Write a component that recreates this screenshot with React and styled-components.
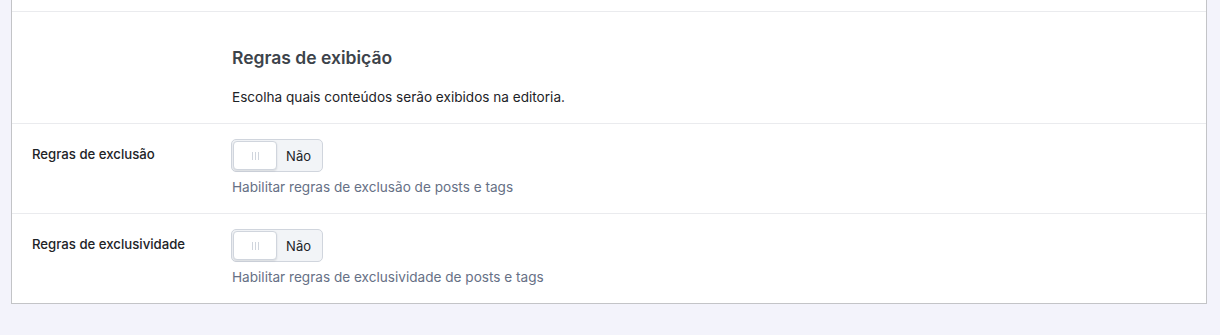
import React from "react";
import styled, { createGlobalStyle } from "styled-components";

const Global = createGlobalStyle`
  html, body { margin: 0; padding: 0; background: #f3f3fb; }
  body { font-family: Inter, "Noto Sans", "Liberation Sans", sans-serif; -webkit-font-smoothing: antialiased; }
`;

const Page = styled.div`
  height: 335px;
  overflow: hidden;
  padding: 0 13px 0 11px;
`;

const Card = styled.div`
  margin-top: -41px;
  background: #ffffff;
  border: 1px solid #c3c4c7;
`;

const Row = styled.div`
  display: grid;
  grid-template-columns: 220px 1fr;
  border-top: ${(p) => (p.$first ? "none" : "1px solid #eaebee")};
  min-height: ${(p) => p.$minH || 0}px;
  box-sizing: border-box;
`;

const LabelCell = styled.div`
  padding: ${(p) => p.$pad || "20px 0 0 20px"};
  font-size: 13.2px;
  font-weight: 500;
  line-height: 20px;
  color: #1d2327;
`;

const ContentCell = styled.div`
  padding: ${(p) => p.$pad || "15px 20px 16px 0"};
  display: flex;
  flex-direction: column;
  align-items: flex-start;
`;

const Heading = styled.h2`
  margin: 0;
  font-size: 17.5px;
  line-height: 24px;
  font-weight: 600;
  color: #3c434a;
`;

const Description = styled.p`
  margin: 17px 0 0;
  font-size: 13.6px;
  line-height: 20px;
  color: #1d2327;
`;

const Help = styled.p`
  margin: 5px 0 0;
  font-size: 13.6px;
  line-height: 20px;
  color: #667085;
`;

const Switch = styled.div`
  position: relative;
  box-sizing: border-box;
  width: 92px;
  height: 33px;
  margin-left: -1px;
  border: 1px solid #d0d5dd;
  border-radius: 5px;
  background: #f2f4f7;
  display: flex;
  align-items: center;
  justify-content: flex-end;
  padding-right: 11px;
  font-size: 13px;
  color: #1d2327;
`;

const Knob = styled.span`
  position: absolute;
  top: 1px;
  left: 1px;
  bottom: 1px;
  right: 50%;
  box-sizing: border-box;
  background: #fff;
  border: 1px solid #d0d5dd;
  border-radius: 4px;
  box-shadow: 0 1px 2px rgba(16, 24, 40, 0.12);
  display: flex;
  align-items: center;
  justify-content: center;
  gap: 2px;
`;

const Grip = styled.i`
  display: block;
  width: 1px;
  height: 8px;
  background: #d0d5dd;
`;

function Toggle({ text }) {
  return (
    <Switch>
      <Knob>
        <Grip />
        <Grip />
        <Grip />
      </Knob>
      {text}
    </Switch>
  );
}

const fields = [
  { label: "Regras de exclusão", help: "Habilitar regras de exclusão de posts e tags" },
  { label: "Regras de exclusividade", help: "Habilitar regras de exclusividade de posts e tags" },
];

export default function App() {
  return (
    <>
      <Global />
      <Page>
        <Card>
          <Row $first $minH={51} />
          <Row $minH={112}>
            <LabelCell />
            <ContentCell $pad="34px 20px 16px 0">
              <Heading>Regras de exibição</Heading>
              <Description>Escolha quais conteúdos serão exibidos na editoria.</Description>
            </ContentCell>
          </Row>
          {fields.map((f) => (
            <Row key={f.label} $minH={90}>
              <LabelCell>{f.label}</LabelCell>
              <ContentCell>
                <Toggle text="Não" />
                <Help>{f.help}</Help>
              </ContentCell>
            </Row>
          ))}
        </Card>
      </Page>
    </>
  );
}
